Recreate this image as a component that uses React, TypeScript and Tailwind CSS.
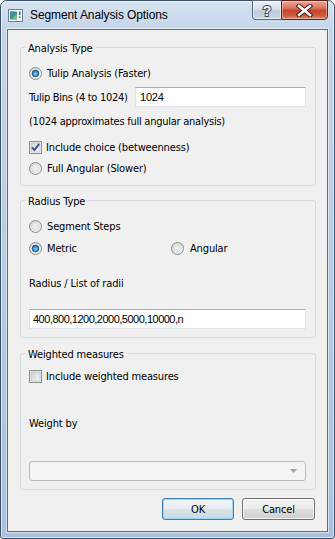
import React from "react";

function Radio({ checked }: { checked?: boolean }) {
  return (
    <svg width="13" height="13" viewBox="0 0 13 13" className="shrink-0 block">
      <defs>
        <linearGradient id="rOut" x1="0" y1="0" x2="1" y2="1">
          <stop offset="0" stopColor="#cfcfcf" />
          <stop offset="1" stopColor="#fbfbfb" />
        </linearGradient>
        <radialGradient id="rIn" cx="0.5" cy="0.5" r="0.6">
          <stop offset="0" stopColor="#f5f5f5" />
          <stop offset="1" stopColor="#d9d9d9" />
        </radialGradient>
        <radialGradient id="rDot" cx="0.5" cy="0.55" r="0.6">
          <stop offset="0" stopColor="#8fe0ff" />
          <stop offset="0.45" stopColor="#3a9ad6" />
          <stop offset="1" stopColor="#18497f" />
        </radialGradient>
      </defs>
      <circle cx="6.5" cy="6.5" r="6" fill="url(#rOut)" stroke="#8a8a8a" strokeWidth="1" />
      <circle cx="6.5" cy="6.5" r="4.3" fill={checked ? "#f4f4f4" : "url(#rIn)"} />
      {checked && <circle cx="6.5" cy="6.5" r="3.4" fill="url(#rDot)" stroke="#1a3f6c" strokeWidth="0.6" />}
    </svg>
  );
}

function Check({ checked }: { checked?: boolean }) {
  return (
    <svg width="13" height="13" viewBox="0 0 13 13" className="shrink-0 block">
      <defs>
        <linearGradient id="cIn" x1="0" y1="0" x2="1" y2="1">
          <stop offset="0" stopColor="#cbcfd5" />
          <stop offset="1" stopColor="#f6f6f6" />
        </linearGradient>
      </defs>
      <rect x="0.5" y="0.5" width="12" height="12" fill="#f4f4f4" stroke="#8e8f8f" />
      <rect x="2" y="2" width="9" height="9" fill="url(#cIn)" stroke="#b4b7bc" strokeWidth="0.6" />
      {checked && (
        <path d="M3 6.3 L5.4 9 L10.2 2.8" fill="none" stroke="#3d4f8c" strokeWidth="1.9" strokeLinejoin="miter" />
      )}
    </svg>
  );
}

function Group({ title, className, children }: { title: string; className: string; children: React.ReactNode }) {
  return (
    <div className={`relative border border-[#d5dbe0] rounded-[3px] flex flex-col pl-[8px] ${className}`}>
      <span className="absolute -top-[6px] left-[5px] px-[2px] bg-[#f0f0f0] leading-[13px]">{title}</span>
      {children}
    </div>
  );
}

function Row({ className, children }: { className?: string; children: React.ReactNode }) {
  return <div className={`h-[20px] flex items-center ${className ?? ""}`}>{children}</div>;
}

function Field({ value, className, pad }: { value: string; className: string; pad: string }) {
  return (
    <div
      className={`h-[20px] bg-white border border-[#e2e3ea] border-t-[#abadb3] flex items-center [font-family:'Liberation_Sans',sans-serif] ${pad} ${className}`}
    >
      {value}
    </div>
  );
}

function AppIcon() {
  return (
    <svg width="15" height="13" viewBox="0 0 15 13" className="block">
      <defs>
        <linearGradient id="ic" x1="0" y1="0" x2="1" y2="1">
          <stop offset="0" stopColor="#2a6f86" />
          <stop offset="1" stopColor="#5fb38e" />
        </linearGradient>
      </defs>
      <rect x="0.5" y="0.5" width="14" height="12" fill="#f6f8fa" stroke="#6f7c8a" />
      <rect x="2" y="2.5" width="7" height="8" fill="url(#ic)" />
      <rect x="2" y="2.5" width="3.5" height="4" fill="#3f8fa6" />
      <rect x="5.5" y="6.5" width="3.5" height="4" fill="#6bbf85" />
      <rect x="11" y="2.5" width="1.5" height="3.5" fill="#2b66c9" />
      <rect x="11" y="7.5" width="1.5" height="1.5" fill="#2b66c9" />
    </svg>
  );
}

function HelpBtn() {
  return (
    <div className="w-[29px] h-[20px] rounded-bl-[4px] border border-[#55677c] border-r-0 bg-[linear-gradient(to_bottom,#eef2f7_0%,#d5dfea_45%,#bccadb_55%,#c9d6e4_100%)] shadow-[inset_0_0_0_1px_rgba(255,255,255,0.6)] flex items-center justify-center">
      <svg width="12" height="15" viewBox="0 0 12 15" className="block">
        <text
          x="6"
          y="12.5"
          textAnchor="middle"
          fontFamily="Liberation Sans, sans-serif"
          fontWeight="bold"
          fontSize="14"
          fill="#ffffff"
          stroke="#3b4a5c"
          strokeWidth="2"
          style={{ paintOrder: "stroke" }}
        >
          ?
        </text>
      </svg>
    </div>
  );
}

function CloseBtn() {
  return (
    <div className="w-[47px] h-[20px] rounded-br-[4px] border border-[#5e2418] bg-[linear-gradient(to_bottom,#eaa898_0%,#d8745e_40%,#c7432b_52%,#cf5a3e_80%,#dd8a6a_100%)] shadow-[inset_0_0_0_1px_rgba(255,255,255,0.35)] flex items-center justify-center">
      <svg width="17" height="13" viewBox="0 0 17 13" className="block">
        <path d="M3 2 L14 11 M14 2 L3 11" stroke="#4a1a10" strokeWidth="4.6" strokeLinecap="square" />
        <path d="M3 2 L14 11 M14 2 L3 11" stroke="#ffffff" strokeWidth="2.6" strokeLinecap="square" />
      </svg>
    </div>
  );
}

export default function App() {
  return (
    <div className="w-[335px] h-[539px] [font-family:'DejaVu_Sans_Condensed','Liberation_Sans',sans-serif] text-[11px] leading-[13px] tracking-[-0.15px] text-black">
      <div className="w-full h-full flex flex-col rounded-t-[7px] rounded-b-[3px] border border-[#3d5268] bg-[linear-gradient(to_bottom,#d6e3f0_0px,#c3d5e9_29px,#b3cae3_60%,#a8c1de_100%)] px-[6px] pb-[6px] shadow-[inset_0_0_0_1px_rgba(255,255,255,0.55)]">
        {/* title bar */}
        <div className="h-[28px] flex items-start shrink-0">
          <div className="h-[28px] flex items-center pl-[1px] gap-[7px]">
            <AppIcon />
            <span className="[font-family:'Liberation_Sans',sans-serif] text-[12px] tracking-[-0.1px] text-black">Segment Analysis Options</span>
          </div>
          <div className="ml-auto flex -mt-[1px]">
            <HelpBtn />
            <CloseBtn />
          </div>
        </div>
        {/* client */}
        <div className="flex-1 border border-[#5b6b7e] bg-[#f0f0f0] flex flex-col pl-[12px] pr-[11px] pt-[17px] shadow-[0_0_0_1px_rgba(255,255,255,0.5)]">
          <Group title="Analysis Type" className="h-[139px] shrink-0">
            <Row className="mt-[15px] gap-[5px]">
              <Radio checked />
              <span>Tulip Analysis (Faster)</span>
            </Row>
            <Row className="mt-[4px]">
              <span className="w-[106px] tracking-[-0.3px]">Tulip Bins (4 to 1024)</span>
              <Field value="1024" className="w-[171px] tracking-[-0.2px]" pad="pl-[4px]" />
            </Row>
            <Row className="mt-[4px]">
              <span className="tracking-[-0.25px]">(1024 approximates full angular analysis)</span>
            </Row>
            <Row className="mt-[6px] gap-[4px]">
              <Check checked />
              <span>Include choice (betweenness)</span>
            </Row>
            <Row className="mt-[1px] gap-[5px]">
              <Radio />
              <span>Full Angular (Slower)</span>
            </Row>
          </Group>

          <Group title="Radius Type" className="h-[138px] mt-[14px] shrink-0">
            <Row className="mt-[15px] gap-[5px]">
              <Radio />
              <span>Segment Steps</span>
            </Row>
            <Row className="mt-[2px]">
              <div className="w-[142px] flex items-center gap-[5px]">
                <Radio checked />
                <span>Metric</span>
              </div>
              <div className="flex items-center gap-[6px]">
                <Radio />
                <span>Angular</span>
              </div>
            </Row>
            <Row className="mt-[15px]">
              <span>Radius / List of radii</span>
            </Row>
            <Field value="400,800,1200,2000,5000,10000,n" className="w-[277px] mt-[16px] tracking-[-0.5px]" pad="pl-[3px]" />
          </Group>

          <Group title="Weighted measures" className="h-[137px] mt-[15px] shrink-0">
            <Row className="mt-[12px] gap-[4px]">
              <Check />
              <span>Include weighted measures</span>
            </Row>
            <Row className="mt-[27px]">
              <span>Weight by</span>
            </Row>
            <div className="mt-[28px] w-[277px] h-[20px] rounded-[3px] border border-[#b9bcbf] bg-[#f4f4f4] flex items-center justify-end pr-[8px]">
              <svg width="7" height="4" viewBox="0 0 7 4" className="block">
                <path d="M0 0 H7 L3.5 4 Z" fill="#a2a2a2" />
              </svg>
            </div>
          </Group>

          <div className="mt-[8px] flex justify-end gap-[8px] pr-[1px] shrink-0">
            <div className="w-[72px] h-[22px] rounded-[3px] border border-[#3c7fb1] bg-[linear-gradient(to_bottom,#f2f5f7_0%,#e9eef2_48%,#d9e3ea_52%,#cdd9e2_100%)] shadow-[inset_0_0_0_1px_#9cd8f5] flex items-center justify-center">
              OK
            </div>
            <div className="w-[73px] h-[22px] rounded-[3px] border border-[#707070] bg-[linear-gradient(to_bottom,#f2f2f2_0%,#ebebeb_48%,#dddddd_52%,#cfcfcf_100%)] shadow-[inset_0_0_0_1px_rgba(255,255,255,0.7)] flex items-center justify-center">
              Cancel
            </div>
          </div>
        </div>
      </div>
    </div>
  );
}
